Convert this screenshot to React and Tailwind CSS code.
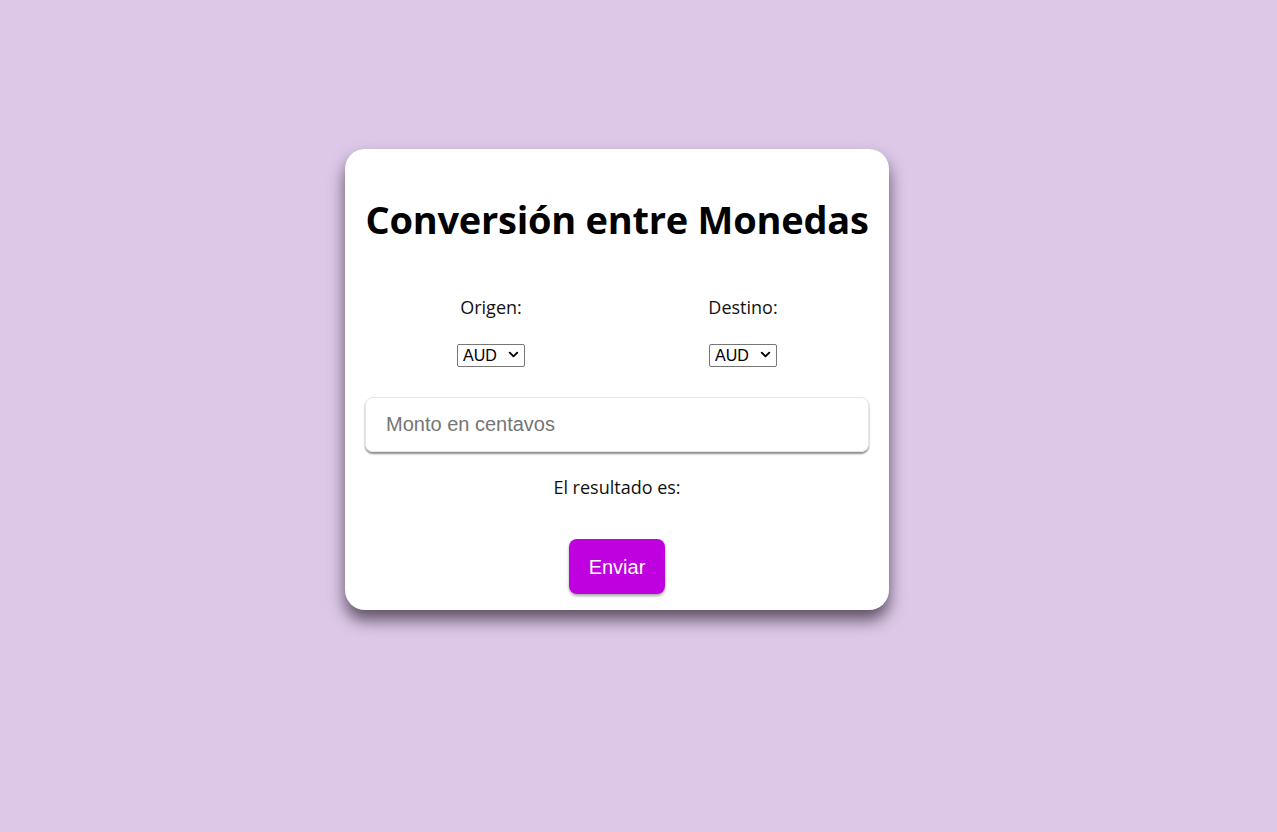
import { ChevronDown } from 'lucide-react'

function CurrencySelect() {
  return (
    <div className="relative mt-[24px] w-[68px] h-[23px]">
      <select className="appearance-none border border-[#767676] rounded-[2px] h-[23px] w-[68px] pl-[5px] text-[16px] leading-[21px] bg-white text-black" style={{ fontFamily: '"Liberation Sans", Arial, sans-serif' }}>
        <option>AUD</option>
      </select>
      <ChevronDown size={15} strokeWidth={3} className="absolute right-[4px] top-[4px] pointer-events-none text-black" />
    </div>
  )
}

export default function App() {
  return (
    <main className="min-h-screen bg-[#ddc8e8] flex justify-center pt-[149px] pr-[43px]" style={{ fontFamily: '"Open Sans", "Noto Sans", sans-serif' }}>
      <div className="w-[544px] h-[461px] bg-white rounded-[20px] px-5 pt-[42px] shadow-[0_10px_16px_rgba(40,30,45,0.7)] flex flex-col">
        <h1 className="text-center text-[38px] font-bold text-black leading-[56px] tracking-[-0.25px]">Conversión entre Monedas</h1>

        <div className="grid grid-cols-2 mt-[48px]">
          <div className="flex flex-col items-center">
            <label className="text-[18px] text-[#111] leading-[24px]">Origen:</label>
            <CurrencySelect />
          </div>
          <div className="flex flex-col items-center">
            <label className="text-[18px] text-[#111] leading-[24px]">Destino:</label>
            <CurrencySelect />
          </div>
        </div>

        <input
          type="text"
          placeholder="Monto en centavos"
          className="mt-[31px] h-[55px] w-full rounded-[8px] border border-[#e6e6e6] px-5 text-[20px] placeholder:text-[#757575] shadow-[0_2px_2px_rgba(0,0,0,0.45)] outline-none"
          style={{ fontFamily: '"Liberation Sans", Arial, sans-serif' }}
        />

        <p className="text-center text-[18px] text-[#111] mt-[23px] leading-[24px]">El resultado es:</p>

        <div className="flex justify-center mt-[40px]">
          <button className="w-[96px] h-[55px] rounded-[8px] bg-[#bf00df] text-white text-[20px] shadow-[0_2px_3px_rgba(0,0,0,0.35)]" style={{ fontFamily: '"Liberation Sans", Arial, sans-serif' }}>
            Enviar
          </button>
        </div>
      </div>
    </main>
  )
}
